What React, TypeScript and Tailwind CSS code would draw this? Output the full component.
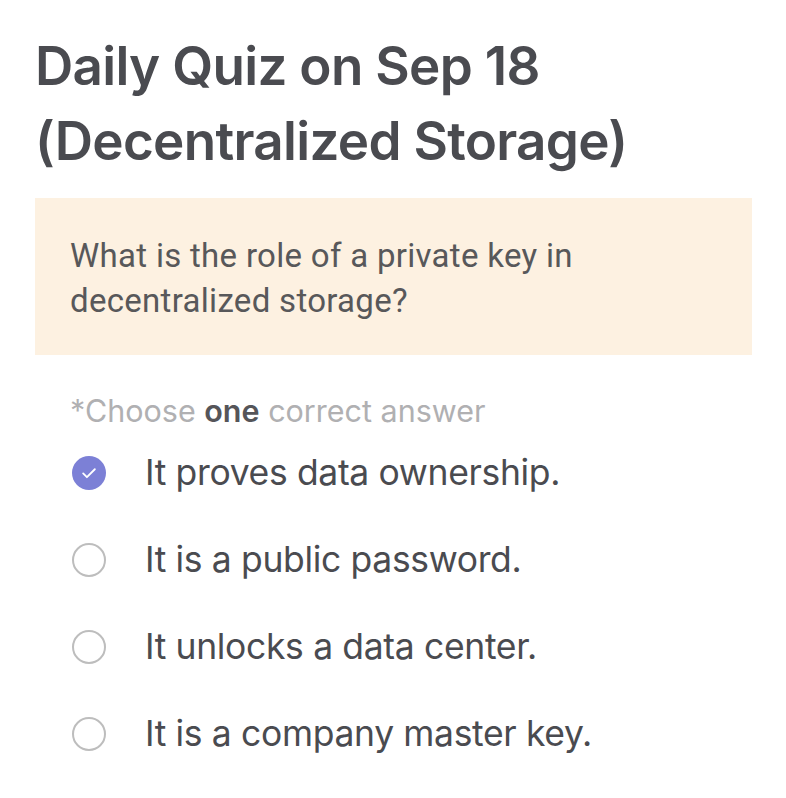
const options = [
  'It proves data ownership.',
  'It is a public password.',
  'It unlocks a data center.',
  'It is a company master key.',
];

function Check() {
  return (
    <span className="flex h-[34px] w-[34px] shrink-0 items-center justify-center rounded-full bg-[#7c80d6]">
      <svg width="20" height="20" viewBox="0 0 24 24" fill="none" stroke="white" strokeWidth="2.2" strokeLinecap="round" strokeLinejoin="round">
        <path d="M5 12.5l4.5 4.5L19 7.5" />
      </svg>
    </span>
  );
}

function Empty() {
  return <span className="h-[34px] w-[34px] shrink-0 rounded-full border-[2.5px] border-[#bdbdbd]" />;
}

export default function App() {
  return (
    <div className="min-h-[798px] w-[786px] bg-white font-['Inter',sans-serif] text-[#4a4a4d]">
      <div className="px-[35px] pt-[29px]">
        <h1 className="text-[53px] font-semibold leading-[75px] tracking-[-0.7px] text-[#4a4b50]">
          Daily Quiz on Sep 18
          <br />
          (Decentralized Storage)
        </h1>

        <div className="mt-[19px] w-[717px] bg-[#fdf1e1] px-[35px] pt-[35px] pb-[32px]">
          <p className="font-['Roboto',sans-serif] text-[33px] leading-[45px] text-[#58585a] tracking-[0.3px]">
            What is the role of a private key in
            <br />
            decentralized storage?
          </p>
        </div>

        <div className="px-[35px] pt-[38px]">
          <p className="text-[30.5px] leading-[36px] text-[#b0b0b2]">
            *Choose <span className="font-semibold text-[#555559]">one</span> correct answer
          </p>

          <div className="flex flex-col">
            {options.map((o, i) => (
              <div key={o} className="flex h-[87px] items-center gap-[39px] pl-[2px]">
                {i === 0 ? <Check /> : <Empty />}
                <span className="text-[35.5px] tracking-[-0.35px] text-[#4a4b50]">{o}</span>
              </div>
            ))}
          </div>
        </div>
      </div>
    </div>
  );
}
